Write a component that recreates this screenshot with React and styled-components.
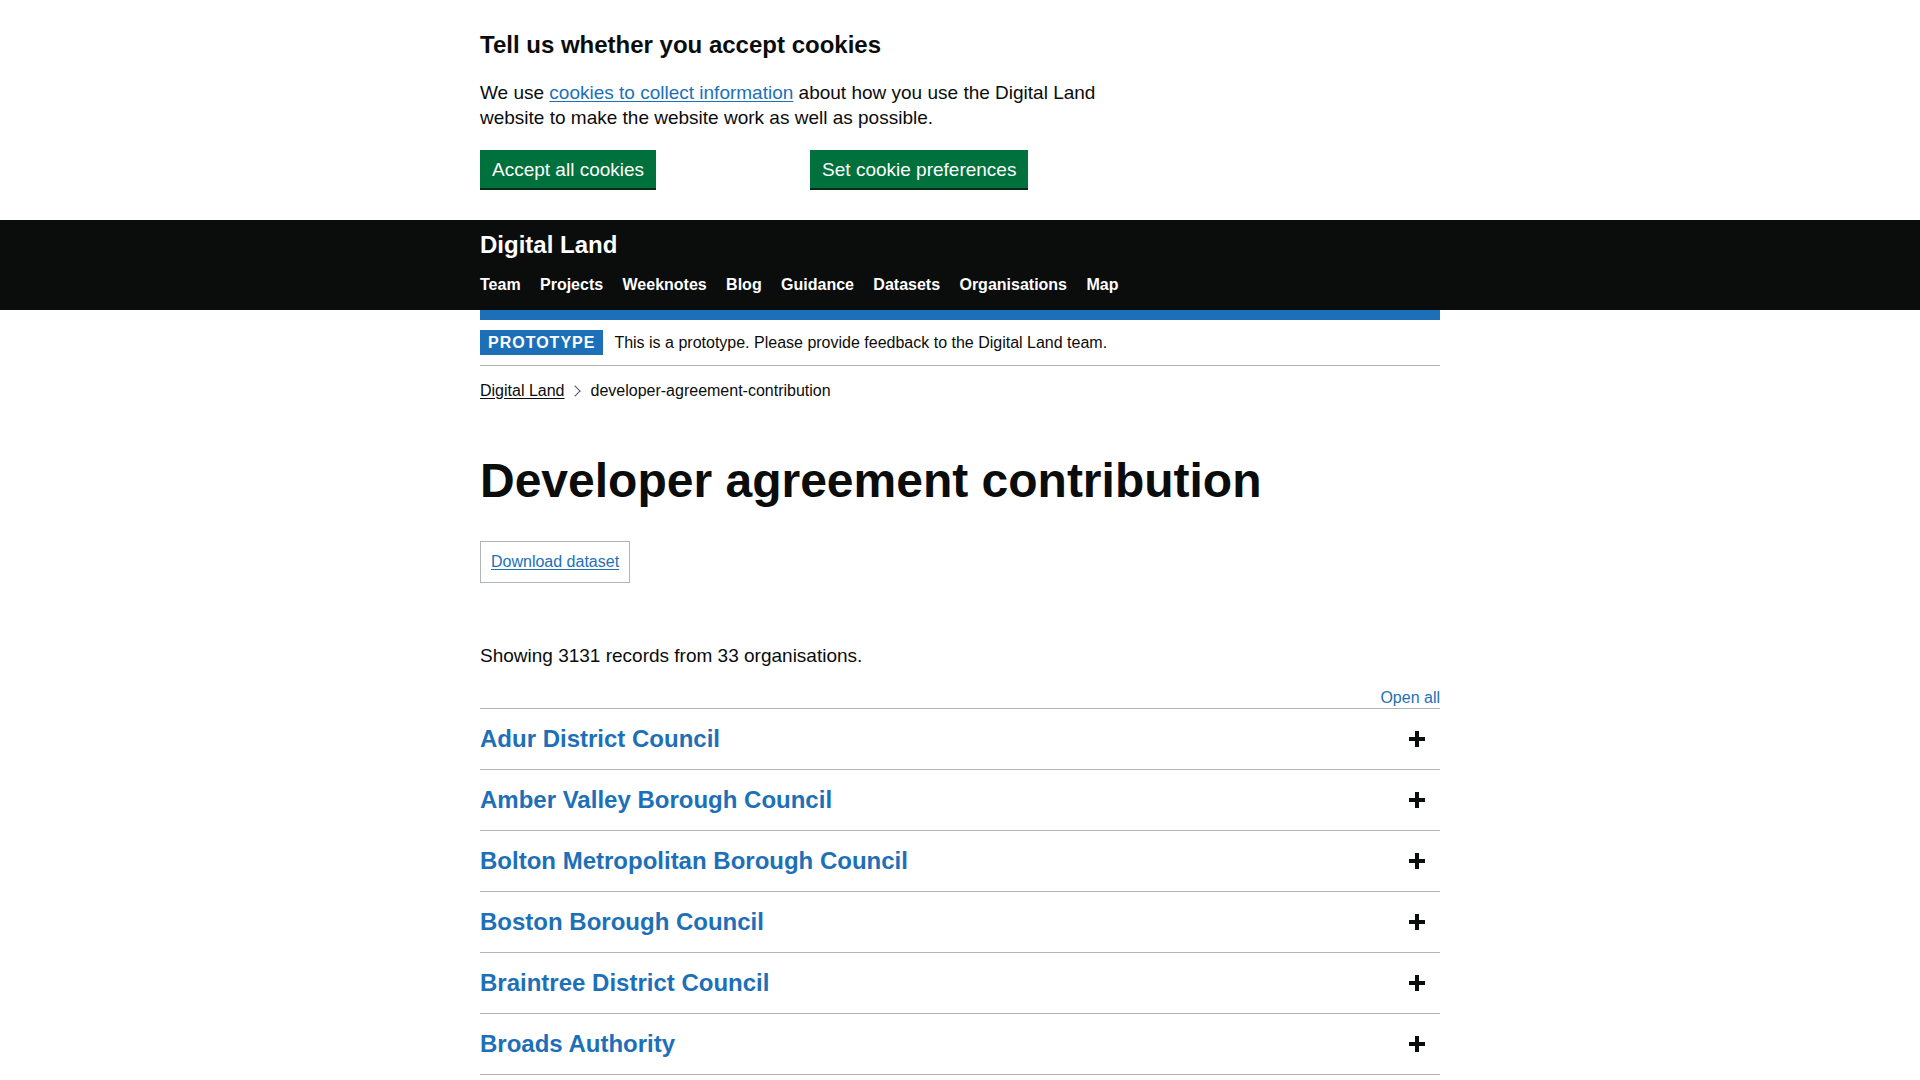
import React from 'react';
import styled, { createGlobalStyle } from 'styled-components';

const GlobalStyle = createGlobalStyle`
  html, body {
    margin: 0;
    padding: 0;
    background: #ffffff;
  }
  body {
    font-family: "Liberation Sans", Arial, sans-serif;
    color: #0b0c0c;
    -webkit-font-smoothing: antialiased;
  }
  * {
    box-sizing: border-box;
  }
`;

const WidthContainer = styled.div`
  width: 960px;
  margin: 0 auto;
`;

// cookie banner
const CookieBanner = styled.div`
  padding-top: 30px;
  background: #ffffff;
`;

const BannerHeading = styled.h2`
  margin: 0 0 20px;
  font-size: 24px;
  line-height: 30px;
  font-weight: 700;
`;

const BannerText = styled.p`
  margin: 0 0 20px;
  max-width: 640px;
  font-size: 19px;
  line-height: 25px;
`;

const Link = styled.a`
  color: ${(p) => (p.$dark ? '#0b0c0c' : '#1d70b8')};
  text-decoration: underline;
  text-underline-offset: 2px;
`;

const ButtonGroup = styled.div`
  display: flex;
  gap: 154px;
`;

const Button = styled.button`
  margin: 0 0 32px;
  padding: 8px 10px 7px;
  border: 2px solid transparent;
  border-radius: 0;
  background: #00703c;
  box-shadow: 0 2px 0 #002d18;
  color: #ffffff;
  font-family: inherit;
  font-size: 19px;
  line-height: 19px;
  cursor: pointer;
`;

// header
const Header = styled.header`
  background: #0b0c0c;
  padding: 10px 0 15px;
`;

const ServiceName = styled.a`
  display: block;
  color: #ffffff;
  font-size: 24px;
  line-height: 30px;
  font-weight: 700;
  text-decoration: none;
`;

const Nav = styled.nav`
  display: flex;
  gap: 19.4px;
  margin-top: 15px;
`;

const NavItem = styled.a`
  color: #ffffff;
  font-size: 16px;
  line-height: 20px;
  font-weight: 700;
  text-decoration: none;
`;

const BlueBar = styled.div`
  height: 10px;
  background: #1d70b8;
`;

// phase banner
const PhaseBanner = styled.div`
  display: flex;
  align-items: center;
  padding: 10px 0;
  border-bottom: 1px solid #b1b4b6;
`;

const Tag = styled.strong`
  display: inline-block;
  margin-right: 11px;
  padding: 5px 8px 4px;
  background: #1d70b8;
  color: #ffffff;
  font-size: 16px;
  line-height: 16px;
  font-weight: 700;
  letter-spacing: 1px;
  text-transform: uppercase;
`;

const PhaseText = styled.span`
  font-size: 16px;
  line-height: 20px;
`;

// breadcrumbs
const Breadcrumbs = styled.ol`
  display: flex;
  margin: 15px 0 10px;
  padding: 0;
  list-style: none;
  font-size: 16px;
  line-height: 20px;
`;

const Crumb = styled.li`
  position: relative;

  & + & {
    margin-left: 10px;
    padding-left: 16px;
  }

  & + &::before {
    content: '';
    position: absolute;
    top: 0;
    bottom: 0;
    left: -4px;
    width: 7px;
    height: 7px;
    margin: auto 0;
    border-style: solid;
    border-color: #505a5f;
    border-width: 1px 1px 0 0;
    transform: rotate(45deg);
  }
`;

// main
const Main = styled.main`
  padding-top: 45px;
`;

const Title = styled.h1`
  margin: 0 0 35px;
  font-size: 48px;
  line-height: 50px;
  font-weight: 700;
`;

const DownloadBox = styled.div`
  display: inline-block;
  padding: 10px;
  border: 1px solid #b1b4b6;
  font-size: 16px;
  line-height: 20px;
`;

const Summary = styled.p`
  margin: 60px 0 20px;
  font-size: 19px;
  line-height: 25px;
`;

const AccordionControls = styled.div`
  display: flex;
  justify-content: flex-end;
`;

const OpenAll = styled.button`
  padding: 0;
  border: 0;
  background: none;
  color: #1d70b8;
  font-family: inherit;
  font-size: 16px;
  line-height: 20px;
  cursor: pointer;
`;

const Accordion = styled.div`
  border-bottom: 1px solid #b1b4b6;
`;

const Section = styled.div`
  border-top: 1px solid #b1b4b6;
`;

const SectionHeader = styled.div`
  display: flex;
  align-items: center;
  justify-content: space-between;
  padding: 15px 15px 15px 0;
  cursor: pointer;
`;

const SectionTitle = styled.h2`
  margin: 0;
  color: #1d70b8;
  font-size: 24px;
  line-height: 30px;
  font-weight: 700;
`;

const PlusIcon = styled.span`
  position: relative;
  width: 16px;
  height: 16px;

  &::before,
  &::after {
    content: '';
    position: absolute;
    background: #0b0c0c;
  }
  &::before {
    left: 0;
    top: 6px;
    width: 16px;
    height: 4px;
  }
  &::after {
    left: 6px;
    top: 0;
    width: 4px;
    height: 16px;
  }
`;

const organisations = [
  'Adur District Council',
  'Amber Valley Borough Council',
  'Bolton Metropolitan Borough Council',
  'Boston Borough Council',
  'Braintree District Council',
  'Broads Authority',
  'Broxtowe Borough Council',
  'Cambridge City Council',
];

const navLinks = ['Team', 'Projects', 'Weeknotes', 'Blog', 'Guidance', 'Datasets', 'Organisations', 'Map'];

export default function App() {
  return (
    <>
      <GlobalStyle />
      <CookieBanner>
        <WidthContainer>
          <BannerHeading>Tell us whether you accept cookies</BannerHeading>
          <BannerText>
            We use <Link href="#">cookies to collect information</Link> about how you use the Digital Land
            website to make the website work as well as possible.
          </BannerText>
          <ButtonGroup>
            <Button type="button">Accept all cookies</Button>
            <Button type="button">Set cookie preferences</Button>
          </ButtonGroup>
        </WidthContainer>
      </CookieBanner>

      <Header>
        <WidthContainer>
          <ServiceName href="#">Digital Land</ServiceName>
          <Nav>
            {navLinks.map((item) => (
              <NavItem key={item} href="#">
                {item}
              </NavItem>
            ))}
          </Nav>
        </WidthContainer>
      </Header>

      <WidthContainer>
        <BlueBar />
        <PhaseBanner>
          <Tag>Prototype</Tag>
          <PhaseText>This is a prototype. Please provide feedback to the Digital Land team.</PhaseText>
        </PhaseBanner>

        <Breadcrumbs>
          <Crumb>
            <Link $dark href="#">
              Digital Land
            </Link>
          </Crumb>
          <Crumb>developer-agreement-contribution</Crumb>
        </Breadcrumbs>

        <Main>
          <Title>Developer agreement contribution</Title>
          <DownloadBox>
            <Link href="#">Download dataset</Link>
          </DownloadBox>

          <Summary>Showing 3131 records from 33 organisations.</Summary>

          <AccordionControls>
            <OpenAll type="button">Open all</OpenAll>
          </AccordionControls>
          <Accordion>
            {organisations.map((name) => (
              <Section key={name}>
                <SectionHeader>
                  <SectionTitle>{name}</SectionTitle>
                  <PlusIcon />
                </SectionHeader>
              </Section>
            ))}
          </Accordion>
        </Main>
      </WidthContainer>
    </>
  );
}
